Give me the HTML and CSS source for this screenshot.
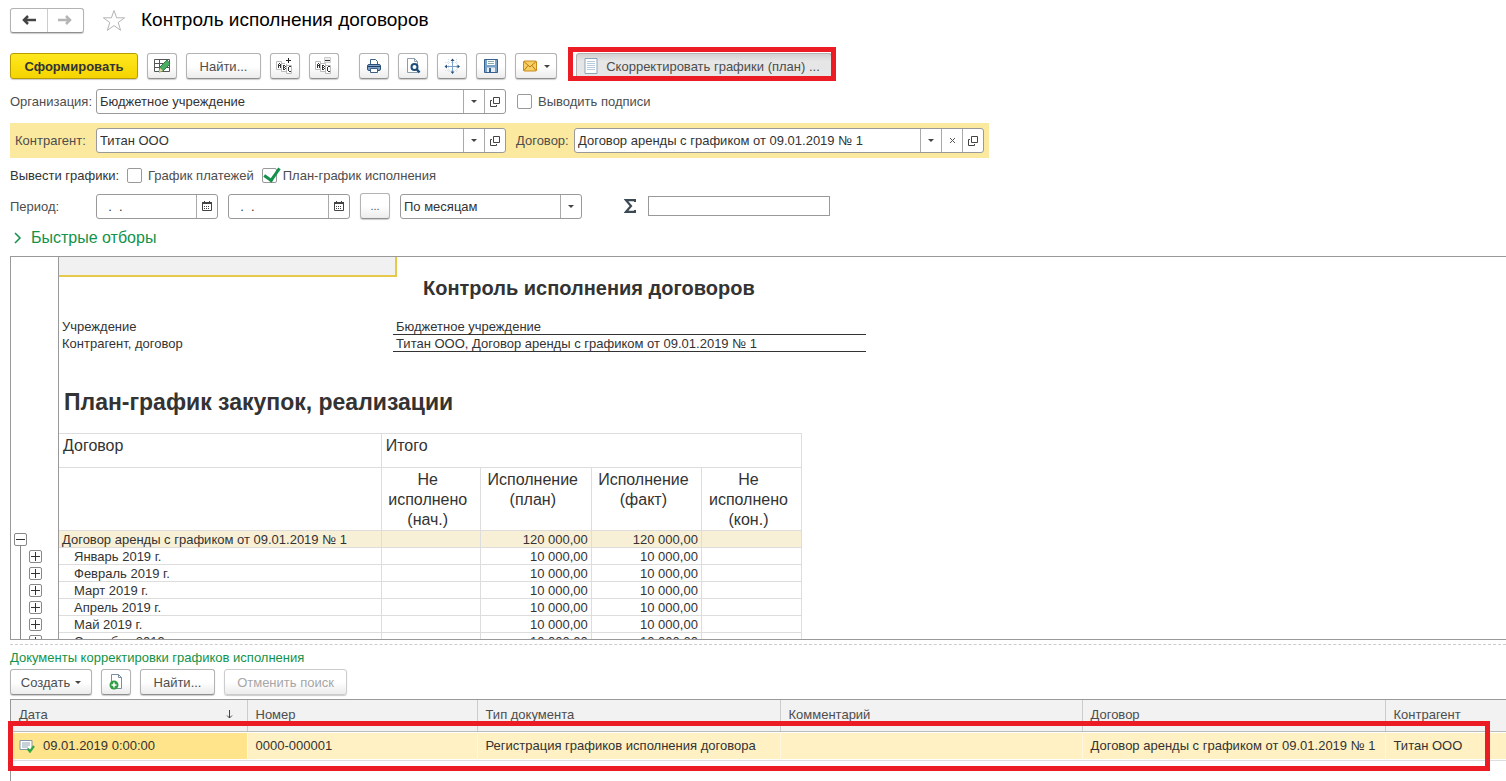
FILE: index.html
```html
<!DOCTYPE html>
<html lang="ru">
<head>
    <meta charset="UTF-8">
    <meta name="viewport" content="width=device-width, initial-scale=1.0">
    <title>Контроль исполнения договоров</title>
    <link rel="stylesheet" href="styles.css">
</head>
<body>

    <!-- Иконки, которые повторяются -->
    <svg width="0" height="0" class="sprite">
        <symbol id="open" viewBox="0 0 10 10"><path d="M3.500 .5h6v6h-6zM2 3.500H.5v6h6V8" fill="none" stroke="#444"/></symbol>
        <symbol id="calendar" viewBox="0 0 10 10"><path d="M.5 1.500h9v8h-9z" fill="#fff" stroke="#444"/><path d="M0 1h10v2H0zM2 0h1v1H2zM7 0h1v1H7z" fill="#444"/><path d="M2 5.500h6M2 7.500h6" stroke="#444" stroke-dasharray="1 1"/></symbol>
        <symbol id="abc" viewBox="0 0 18 18"><g fill="#fff" stroke="#bbb"><path d="M.5 4.500h5v8h-5zM5.500 6.500h5v8h-5zM10.500 8.500h5v8h-5z"/></g><g fill="none" stroke="#333"><path d="M2.500 11V7M4.500 11V7M3 6.500h1M3 8.500h1M7.500 8v5M8 8.500h1M8 10.500h1M8 12.500h1M9.500 9v1M9.500 11v1M12.500 10v4M13 9.500h2M13 14.500h2"/></g></symbol>
    </svg>

    <header class="title-bar">
        <div class="nav-buttons">
            <button aria-label="Назад"><svg width="14" height="10" viewBox="0 0 14 10"><path d="M14 5H3M6 1L2 5l4 4" fill="none" stroke="#444" stroke-width="2.500"/></svg></button>
            <button aria-label="Вперед"><svg width="14" height="10" viewBox="0 0 14 10"><path d="M0 5h11M8 1l4 4-4 4" fill="none" stroke="#b5b5b5" stroke-width="2.500"/></svg></button>
        </div>
        <svg class="star" width="24" height="23" viewBox="0 0 24 23"><path d="M12 1.500l2.600 7.300h8l-6.400 4.700 2.400 7.800-6.600-4.700-6.600 4.700 2.400-7.800L1.400 8.800h8z" fill="#fff" stroke="#b4b4b4"/></svg>
        <h1>Контроль исполнения договоров</h1>
    </header>

    <div class="toolbar">
        <button class="btn primary">Сформировать</button>
        <button class="btn icon" aria-label="Изменить вариант">
            <svg width="18" height="16" viewBox="0 0 18 16"><path d="M1.500 1.500h15v12h-15zM1.500 5.500h15M1.500 9.500h15M6.500 1.500v12" fill="#fff" stroke="#555"/><path d="M6 14l1-5 7-7 3 4-7 7z" fill="#4cae63" stroke="#2f7d46"/><path d="M6 14l1-4 3 3z" fill="#f4d3a0"/></svg>
        </button>
        <button class="btn find">Найти...</button>
        <button class="btn icon" aria-label="Развернуть группы">
            <svg width="18" height="18" viewBox="0 0 18 18"><use href="#abc"/><path d="M9 0h7v7H9z" fill="#fff"/><path d="M10 3.500h5M12.500 1v5" stroke="#222"/></svg>
        </button>
        <button class="btn icon" aria-label="Свернуть группы">
            <svg width="18" height="18" viewBox="0 0 18 18"><use href="#abc"/><path d="M9.500 .5h6v5h-6z" fill="#eee" stroke="#ccc"/><path d="M10 3.500h5" stroke="#333"/></svg>
        </button>
        <button class="btn icon spaced" aria-label="Печать">
            <svg width="16" height="16" viewBox="0 0 16 16"><path d="M4.500 7V1.500h5l2 2V7" fill="#fff" stroke="#3c5f85"/><rect x="1.500" y="6.500" width="13" height="6" rx="1.500" fill="#7ea3c9" stroke="#2c5078"/><path d="M2 8.500h12" stroke="#1f3d60"/><path d="M4.500 10.500h7v4h-7z" fill="#fff" stroke="#3c5f85"/></svg>
        </button>
        <button class="btn icon" aria-label="Предварительный просмотр">
            <svg width="16" height="16" viewBox="0 0 16 16"><path d="M2.500 .5h7l3 3v11h-10z" fill="#fff" stroke="#8a9bab"/><path d="M9.500 .5v3h3" fill="none" stroke="#8a9bab"/><circle cx="9.500" cy="9" r="3" fill="#fff" stroke="#1d4e7c" stroke-width="2"/><path d="M11.500 11l3 3.500" stroke="#1d4e7c" stroke-width="2.500"/></svg>
        </button>
        <button class="btn icon" aria-label="Параметры страницы">
            <svg width="16" height="16" viewBox="0 0 16 16"><path d="M8.500 2v12M2 8.500h12" stroke="#7ba2c8"/><path d="M4.500 1v14M12.500 1v14M1 4.500h14M1 12.500h14" stroke="#d3e1ed" stroke-dasharray="1 1"/><path d="M6.500 3l2-2.500 2 2.500zM6.500 13.500l2 2.500 2-2.500zM3 6.500L.5 8.500l2.500 2zM13.500 6.500l2.500 2-2.500 2z" fill="#2c5078"/></svg>
        </button>
        <button class="btn icon" aria-label="Сохранить">
            <svg width="16" height="16" viewBox="0 0 16 16"><path d="M1.500 1.500h13v13h-13z" fill="#7ba2c8" stroke="#36618e"/><path d="M4 2h8v5H4z" fill="#fff"/><path d="M5 3.500h6M5 5.500h6" stroke="#8aa"/><path d="M4 9.500h8V14H4z" fill="#e8eef4"/><path d="M6 10h2v4H6z" fill="#36618e"/></svg>
        </button>
        <button class="btn mail" aria-label="Отправить">
            <svg width="14" height="12" viewBox="0 0 14 12"><rect x=".5" y="1" width="13" height="10" rx="1" fill="#f8cf63" stroke="#c98a1b"/><path d="M1 1.500l6 5.500 6-5.500M1 10.500l4-5M13 10.500l-4-5" fill="none" stroke="#b97a12"/></svg>
            <i class="caret"></i>
        </button>
        <div class="marked">
            <button class="btn pressed">
                <svg width="14" height="16" viewBox="0 0 14 16"><path d="M1 .5h12v15H1z" fill="#fff" stroke="#8ba4bd"/><path d="M3 3.500h8M3 5.500h8M3 7.500h8M3 9.500h8M3 11.500h8" stroke="#b8cbdc"/></svg>
                Скорректировать графики (план) ...
            </button>
        </div>
    </div>

    <div class="row">
        <label class="caption" for="org">Организация:</label>
        <div class="field wide">
            <input type="text" id="org" value="Бюджетное учреждение">
            <button aria-label="Выбрать"><i class="caret"></i></button>
            <button aria-label="Открыть"><svg width="10" height="10"><use href="#open"/></svg></button>
        </div>
        <label class="check after-field"><input type="checkbox"> Выводить подписи</label>
    </div>

    <div class="row band">
        <label class="caption" for="partner">Контрагент:</label>
        <div class="field wide">
            <input type="text" id="partner" value="Титан ООО">
            <button aria-label="Выбрать"><i class="caret"></i></button>
            <button aria-label="Открыть"><svg width="10" height="10"><use href="#open"/></svg></button>
        </div>
        <label class="caption-2" for="contract">Договор:</label>
        <div class="field wide">
            <input type="text" id="contract" value="Договор аренды с графиком от 09.01.2019 № 1">
            <button aria-label="Выбрать"><i class="caret"></i></button>
            <button aria-label="Очистить"><svg width="7" height="7" viewBox="0 0 7 7"><path d="M1 1l5 5M6 1L1 6" stroke="#555"/></svg></button>
            <button aria-label="Открыть"><svg width="10" height="10"><use href="#open"/></svg></button>
        </div>
    </div>

    <div class="row checks">
        <span class="dark">Вывести графики:</span>
        <label class="check"><input type="checkbox"> График платежей</label>
        <label class="check"><input type="checkbox" checked> План-график исполнения</label>
    </div>

    <div class="row period">
        <label class="caption" for="from">Период:</label>
        <div class="field date">
            <input type="text" id="from" value="  .  .">
            <button aria-label="Календарь"><svg width="10" height="10"><use href="#calendar"/></svg></button>
        </div>
        <div class="field date">
            <input type="text" aria-label="Конец периода" value="  .  .">
            <button aria-label="Календарь"><svg width="10" height="10"><use href="#calendar"/></svg></button>
        </div>
        <button class="btn icon dots">...</button>
        <div class="field step">
            <select aria-label="Периодичность"><option>По месяцам</option></select>
            <button aria-label="Выбрать"><i class="caret"></i></button>
        </div>
        <label class="sigma" for="sum"><svg width="12" height="14" viewBox="0 0 12 14"><path d="M11 3V1.200H2L7 7l-5 5.800h9V11" fill="none" stroke="#3c4a55" stroke-width="2.200"/></svg></label>
        <input type="text" class="sum" id="sum" aria-label="Сумма" readonly>
    </div>

    <a href="#" class="filters"><svg width="8" height="12" viewBox="0 0 8 12"><path d="M1 1l5 5-5 5" fill="none" stroke="#12924a" stroke-width="1.500"/></svg>Быстрые отборы</a>

    <!-- Отчет -->
    <main class="report">
        <div class="tree">
            <button class="minus" aria-label="Свернуть"></button>
            <div class="branch">
                <button class="plus" aria-label="Развернуть"></button>
                <button class="plus" aria-label="Развернуть"></button>
                <button class="plus" aria-label="Развернуть"></button>
                <button class="plus" aria-label="Развернуть"></button>
                <button class="plus" aria-label="Развернуть"></button>
                <button class="plus" aria-label="Развернуть"></button>
            </div>
        </div>
        <div class="sheet">
            <div class="active-cell"></div>
            <h2>Контроль исполнения договоров</h2>
            <dl>
                <dt>Учреждение</dt>
                <dd>Бюджетное учреждение</dd>
                <dt>Контрагент, договор</dt>
                <dd>Титан ООО, Договор аренды с графиком от 09.01.2019 № 1</dd>
            </dl>
            <h3>План-график закупок, реализации</h3>
            <table class="plan">
                <colgroup><col class="c-name"><col class="c-start"><col class="c-plan"><col class="c-fact"><col class="c-end"></colgroup>
                <thead>
                    <tr class="top"><th>Договор</th><th colspan="4">Итого</th></tr>
                    <tr class="sub"><th></th><th>Не исполнено (нач.)</th><th>Исполнение (план)</th><th>Исполнение (факт)</th><th>Не исполнено (кон.)</th></tr>
                </thead>
                <tbody>
                    <tr class="total"><td>Договор аренды с графиком от 09.01.2019 № 1</td><td></td><td>120 000,00</td><td>120 000,00</td><td></td></tr>
                    <tr><td>Январь 2019 г.</td><td></td><td>10 000,00</td><td>10 000,00</td><td></td></tr>
                    <tr><td>Февраль 2019 г.</td><td></td><td>10 000,00</td><td>10 000,00</td><td></td></tr>
                    <tr><td>Март 2019 г.</td><td></td><td>10 000,00</td><td>10 000,00</td><td></td></tr>
                    <tr><td>Апрель 2019 г.</td><td></td><td>10 000,00</td><td>10 000,00</td><td></td></tr>
                    <tr><td>Май 2019 г.</td><td></td><td>10 000,00</td><td>10 000,00</td><td></td></tr>
                    <tr><td>Сентябрь 2019 г.</td><td></td><td>10 000,00</td><td>10 000,00</td><td></td></tr>
                </tbody>
            </table>
        </div>
    </main>

    <!-- Документы корректировки -->
    <section class="docs">
        <h4>Документы корректировки графиков исполнения</h4>
        <div class="toolbar">
            <button class="btn create">Создать <i class="caret"></i></button>
            <button class="btn icon" aria-label="Скопировать">
                <svg width="16" height="16" viewBox="0 0 16 16"><path d="M3.500 .5h7l3 3v11h-10z" fill="#fff" stroke="#7b8fa3"/><path d="M10.500 .5v3h3" fill="none" stroke="#7b8fa3"/><circle cx="6" cy="11" r="4.500" fill="#2f9e44"/><path d="M6 8.500v5M3.500 11h5" stroke="#fff" stroke-width="1.500"/></svg>
            </button>
            <button class="btn find">Найти...</button>
            <button class="btn cancel" disabled>Отменить поиск</button>
        </div>
        <div class="list">
            <table>
                <colgroup><col class="d-date"><col class="d-num"><col class="d-type"><col class="d-note"><col class="d-contract"><col></colgroup>
                <thead>
                    <tr>
                        <th><div class="sorted">Дата <svg width="7" height="9" viewBox="0 0 7 9"><path d="M3.500 0v8M1 5.500l2.500 2.500L6 5.500" fill="none" stroke="#444"/></svg></div></th>
                        <th>Номер</th><th>Тип документа</th><th>Комментарий</th><th>Договор</th><th>Контрагент</th>
                    </tr>
                </thead>
                <tbody>
                    <tr>
                        <td><div class="doc"><svg width="16" height="14" viewBox="0 0 16 14"><path d="M1 1.500h12v9H1z" fill="#fff" stroke="#8496a8"/><path d="M3 4h8M3 6h8M3 8h6" stroke="#8fa3b5"/><path d="M8.500 9.500l2.500 3L15 7" fill="none" stroke="#35a845" stroke-width="2.200"/></svg>09.01.2019 0:00:00</div></td>
                        <td>0000-000001</td><td>Регистрация графиков исполнения договора</td><td></td><td>Договор аренды с графиком от 09.01.2019 № 1</td><td>Титан ООО</td>
                    </tr>
                </tbody>
            </table>
        </div>
    </section>

</body>
</html>
```
FILE: styles.css
```css
* {
    box-sizing: border-box;
}

body {
    margin: 0;
    padding: 7px 0 0 10px;
    height: 100vh;
    display: flex;
    flex-direction: column;
    overflow: hidden;
    font-family: "Liberation Sans", Arial, sans-serif;
    font-size: 13px;
    color: #4d4d4d;
    background: #fff;
}

h1, h2, h3, h4, dl, dd {
    margin: 0;
}

button, input, select {
    font: inherit;
    color: inherit;
}

.sprite {
    position: absolute;
}

/* Заголовок */
.title-bar {
    display: flex;
    align-items: center;
    height: 26px;
    margin-bottom: 20px;
}

.title-bar h1 {
    font-size: 19px;
    font-weight: normal;
    color: #000;
}

.nav-buttons {
    display: flex;
    width: 74px;
    height: 25px;
    border: 1px solid #b3b3b3;
    border-bottom-color: #8f8f8f;
    border-radius: 3px;
    box-shadow: 0 1px 1px #ccc;
}

.nav-buttons button {
    flex: 1;
    padding: 0;
    border: none;
    background: none;
}

.nav-buttons button + button {
    border-left: 1px solid #ccc;
}

.star {
    margin: 0 15px 0 18px;
}

/* Кнопки */
.toolbar {
    display: flex;
    gap: 9px;
}

.btn {
    display: flex;
    align-items: center;
    justify-content: center;
    height: 26px;
    padding: 0;
    border: 1px solid #b3b3b3;
    border-bottom-color: #8f8f8f;
    border-radius: 3px;
    background: linear-gradient(#fff 50%, #ececec);
    box-shadow: 0 1px 1px #ccc;
    white-space: nowrap;
}

.primary {
    width: 128px;
    border-color: #b59b00;
    background: linear-gradient(#ffe81f, #f5d400);
    font-weight: bold;
    color: #333;
}

.icon {
    width: 30px;
}

.find {
    width: 75px;
}

.spaced {
    margin-left: 11px;
}

.mail {
    width: 42px;
    gap: 7px;
}

.caret {
    border: 3px solid transparent;
    border-top-color: #444;
    border-bottom: none;
}

.marked {
    position: relative;
    margin-left: 10px;
}

.marked::after {
    content: "";
    position: absolute;
    inset: -6px -4px -2px -8px;
    border: 5px solid #eb1c24;
}

.pressed {
    width: 256px;
    padding-right: 4px;
    gap: 8px;
    background: linear-gradient(#d2d2d2, #e6e6e6 30%);
    box-shadow: none;
}

.create {
    width: 82px;
    gap: 5px;
}

.cancel {
    width: 123px;
    border-color: #ccc;
    color: #a6a6a6;
}

/* Поля */
.row {
    display: flex;
    align-items: center;
}

.toolbar + .row {
    margin: 10px 0 9px;
}

.caption {
    width: 86px;
}

.field {
    display: flex;
    height: 25px;
    border: 1px solid #999;
    border-radius: 3px;
    background: #fff;
    color: #333;
}

.field input, .field select {
    flex: 1;
    min-width: 0;
    padding: 0 3px;
    border: none;
    background: none;
    outline: none;
    appearance: none;
}

.field button {
    display: flex;
    align-items: center;
    justify-content: center;
    width: 21px;
    padding: 0;
    border: none;
    border-left: 1px solid #aaa;
    background: none;
}

.wide {
    width: 410px;
}

.check {
    display: flex;
    align-items: center;
    gap: 6px;
}

.check input {
    width: 15px;
    height: 15px;
    margin: 0;
    border: 1px solid #999;
    border-radius: 2px;
    background: #fff;
    appearance: none;
}

.check input:checked::before {
    content: "";
    display: block;
    width: 7px;
    height: 13px;
    margin: -4px 0 0 4px;
    border: solid #12924a;
    border-width: 0 3px 3px 0;
    transform: rotate(35deg);
}

.after-field {
    margin-left: 11px;
}

.band {
    width: 979px;
    height: 35px;
    padding-left: 5px;
    background: #fbe9a0;
}

.band .caption {
    width: 81px;
}

.caption-2 {
    width: 68px;
    padding-left: 10px;
}

.checks {
    height: 15px;
    margin: 10px 0;
    gap: 8px;
}

.dark {
    color: #333;
}

.date {
    width: 122px;
    margin-right: 10px;
}

.date input {
    padding-left: 4px;
    white-space: pre;
}

.dots {
    font-size: 11px;
}

.step {
    width: 182px;
    margin-left: 10px;
}

.sigma {
    display: flex;
    margin: 0 12px 0 42px;
}

.sum {
    width: 182px;
    height: 20px;
    border: 1px solid #999;
    outline: none;
}

.filters {
    display: flex;
    align-items: center;
    align-self: flex-start;
    gap: 9px;
    height: 20px;
    margin: 9px 0 8px 4px;
    font-size: 16px;
    color: #12924a;
    text-decoration: none;
}

/* Отчет */
.report {
    flex: 1;
    min-height: 0;
    display: flex;
    border: 1px solid #999;
    border-right: none;
    overflow: hidden;
    color: #333;
}

.tree {
    width: 48px;
    padding: 276px 0 0 3px;
    border-right: 1px solid #999;
}

.tree button {
    display: block;
    width: 13px;
    height: 13px;
    padding: 0;
    border: 1px solid #888;
    border-radius: 2px;
    background: linear-gradient(#333, #333) center / 9px 1px no-repeat;
}

.tree .plus {
    margin-bottom: 4px;
    background: linear-gradient(#333, #333) center / 9px 1px no-repeat, linear-gradient(#333, #333) center / 1px 9px no-repeat;
}

.branch {
    margin-left: 6px;
    padding: 4px 0 0 8px;
    border-left: 1px solid #888;
}

.active-cell {
    width: 338px;
    height: 20px;
    border: solid #e6c94a;
    border-width: 0 2px 2px 0;
    background: #f1f1f1;
}

.report h2 {
    padding-left: 364px;
    line-height: 22px;
    font-size: 20px;
}

.report dl {
    display: grid;
    grid-template-columns: 334px 473px;
    padding-top: 19px;
}

.report dt, .report dd {
    height: 17px;
    padding-left: 3px;
    line-height: 17px;
}

.report dd {
    border-bottom: 1px solid #333;
}

.report h3 {
    padding: 36px 0 17px 5px;
    line-height: 28px;
    font-size: 23px;
}

table {
    border-collapse: collapse;
    table-layout: fixed;
}

.plan {
    width: 743px;
}

.c-name { width: 322px; }
.c-start { width: 99px; }
.c-plan { width: 111px; }
.c-fact { width: 110px; }
.c-end { width: 100px; }

.plan th, .plan td {
    border: 1px solid #ddd;
}

.plan th:first-child, .plan td:first-child {
    border-left: none;
}

.plan th {
    padding: 2px 4px;
    font-size: 16px;
    font-weight: normal;
    line-height: 20px;
    text-align: left;
    vertical-align: top;
}

.plan .top {
    height: 34px;
}

.plan .sub th {
    padding: 2px 8px 0 2px;
    text-align: center;
}

.plan td {
    height: 17px;
    padding: 2px 3px 0;
    line-height: 14px;
    text-align: right;
}

.plan td:first-child {
    padding-left: 15px;
    text-align: left;
}

.plan .total {
    background: #f8f0d6;
}

.plan .total td:first-child {
    padding-left: 3px;
}

/* Список документов */
.docs {
    margin-top: 4px;
    border-top: 1px dashed #ccc;
}

.docs h4 {
    padding: 4px 0 3px;
    line-height: 17px;
    font-size: 13px;
    font-weight: normal;
    color: #12924a;
}

.list {
    position: relative;
    height: 82px;
    margin-top: 4px;
    border-top: 1px solid #999;
    border-left: 1px solid #999;
}

.list table {
    width: 100%;
}

.d-date { width: 236px; }
.d-num { width: 230px; }
.d-type { width: 303px; }
.d-note { width: 302px; }
.d-contract { width: 303px; }

.list th {
    height: 31px;
    padding: 0 8px 1px;
    border-right: 1px solid #ccc;
    border-bottom: 1px solid #bbb;
    background: #f2f2f2;
    font-weight: normal;
    text-align: left;
}

.sorted {
    display: flex;
    align-items: center;
    justify-content: space-between;
    padding-right: 6px;
}

.list td {
    height: 29px;
    padding: 0 8px;
    border-right: 1px solid #fff8e0;
    border-bottom: 1px solid #ddd;
    background: linear-gradient(#fff1c4, #fff1c4) 0 1px / 100% 26px no-repeat;
    color: #333;
}

.list td:first-child {
    background: linear-gradient(#ffe48c, #ffe48c) 0 1px / 100% 26px no-repeat;
}

.list th:last-child, .list td:last-child {
    border-right: none;
}

.doc {
    display: flex;
    align-items: center;
    gap: 8px;
}

/* Красная рамка вокруг строки */
.list::after {
    content: "";
    position: absolute;
    inset: 21px 16px 10px -3px;
    border: 5px solid #eb1c24;
}
```
